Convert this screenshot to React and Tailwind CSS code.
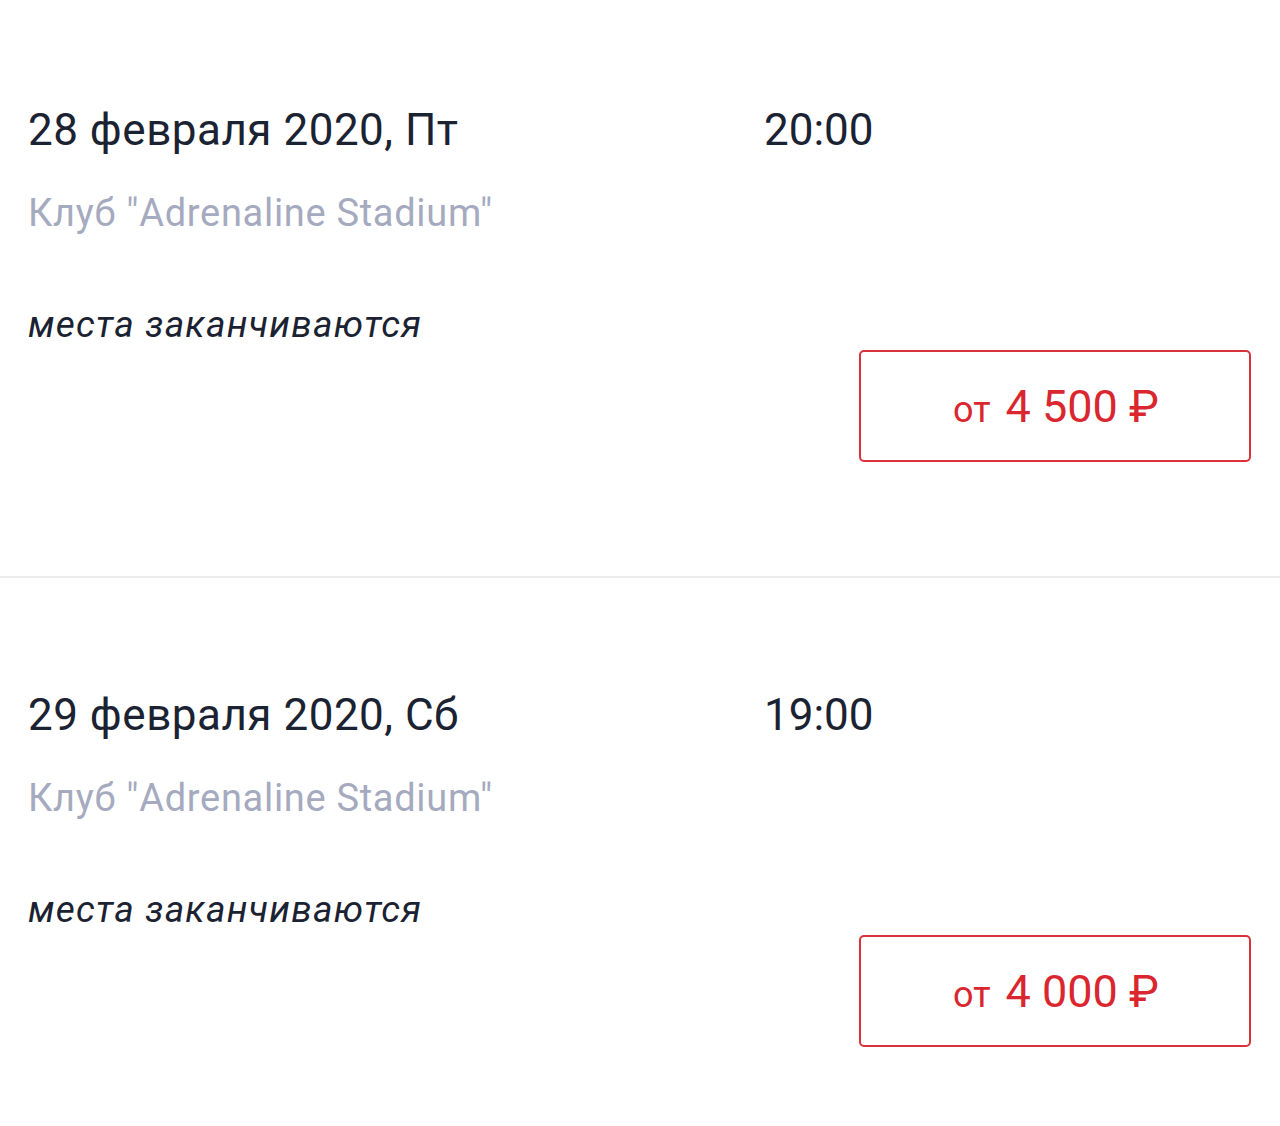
import React from 'react';

const sessions = [
  { date: '28 февраля 2020, Пт', time: '20:00', price: '4 500', pt: 'pt-[104px]' },
  { date: '29 февраля 2020, Сб', time: '19:00', price: '4 000', pt: 'pt-[111px]' },
];

const Session = ({ date, time, price, pt }) => (
  <div className={`${pt} pb-[114px] pl-[28px] pr-[29px]`}>
    {/* Date & time */}
    <div className="flex items-center text-[44px] leading-[52px] text-[#1b2232]">
      <span className="w-[736px] tracking-[0.5px]">{date}</span>
      <span>{time}</span>
    </div>

    {/* Venue */}
    <div className="mt-[35px] text-[38px] leading-[44px] tracking-[0.7px] text-[#a5aabf]">
      Клуб "Adrenaline Stadium"
    </div>

    {/* Availability & price */}
    <div className="mt-[68px] flex justify-between items-start">
      <span className="italic text-[37px] leading-[44px] tracking-[1.2px] text-[#1b2232]">места заканчиваются</span>
      <button className="mt-[47px] w-[392px] h-[112px] rounded-[5px] border-2 border-[#d9323a] flex items-center justify-center text-[#d9262f]">
        <span className="flex items-baseline gap-[15px] pt-[2px] pl-[2px]">
          <span className="text-[36px]">от</span>
          <span className="text-[45px]">{price} ₽</span>
        </span>
      </button>
    </div>
  </div>
);

export default function App() {
  return (
    <div className="w-[1280px] min-h-[1126px] bg-white font-['Roboto',sans-serif]">
      <Session {...sessions[0]} />
      <div className="h-[2px] bg-[#ececec]" />
      <Session {...sessions[1]} />
    </div>
  );
}
